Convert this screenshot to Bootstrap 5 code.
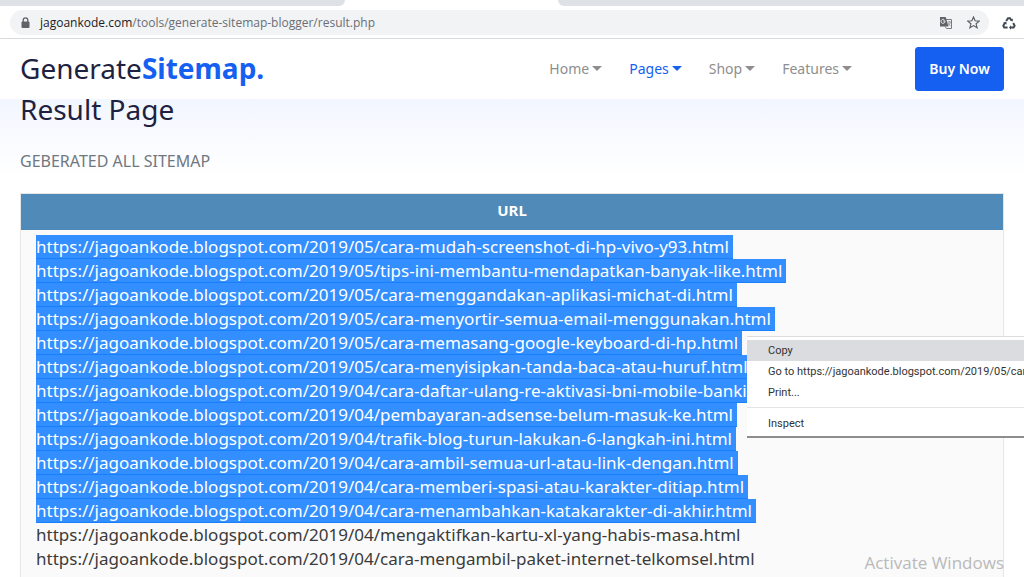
<!DOCTYPE html>
<html lang="en">
<head>
<meta charset="utf-8">
<meta name="viewport" content="width=device-width, initial-scale=1">
<title>Generate Sitemap</title>
<link href="https://cdn.jsdelivr.net/npm/bootstrap@5.3.0/dist/css/bootstrap.min.css" rel="stylesheet">
<style>
  html, body { height: 100%; }
  body { font-family: "Noto Sans", "Open Sans", sans-serif; background: #fff; color: #3a3f44; overflow: hidden; }
  .tab-strip { height: 6px; }
  .tab-left, .tab-right { background: #dee1e6; }
  .tab-left { width: 345px; border-bottom-right-radius: 6px; }
  .tab-right { border-bottom-left-radius: 6px; }
  .active-tab { width: 213px; }
  .address-bar { height: 33px; border-bottom: 1px solid #d9dadc; padding: 4px 8px 3px 10px; gap: 13px; }
  .omnibox { height: 25px; border-radius: 13px; background: #f1f3f4; padding: 0 9px 0 11px; gap: 10px; }
  .host-text { color: #202124; }
  .address-text { font-family: "Open Sans", sans-serif; font-size: 12px; line-height: 24px; color: #6b6f74; }
  .plain-btn { border: 0; padding: 0; background: none; line-height: 1; display: flex; }
  .site-nav { height: 60px; padding: 8px 20px; background: #fff; }
  .brand-text { font-size: 28px; line-height: 40px; color: #1e2240; padding-bottom: 3px; }
  .brand-text strong { color: #1560f0; font-weight: 700; }
  .menu-links { gap: 27px; margin-right: 63px; }
  .menu-links .nav-link { font-size: 14px; line-height: 24px; padding: 0; color: #8e8e8e; }
  .menu-links .nav-link.active { color: #1560f0; }
  .menu-links .dropdown-toggle::after { margin-left: 3px; vertical-align: 3px; border-width: 5px 5px 0; }
  .buy-btn { background: #1560f0; border-color: #1560f0; border-radius: 3px; color: #fff; font-size: 14px; font-weight: 600; width: 89px; height: 44px; padding: 0 0 2px; }
  .result-area { padding: 0 20px; background: linear-gradient(#f2f6ff, #fff 80px); }
  .result-area h1 { font-size: 28px; line-height: 20px; font-weight: 400; color: #1e2240; margin: 0 0 30px; }
  .section-label { font-size: 16px; line-height: 24px; color: #70777e; margin-bottom: 20px; }
  .url-table { border: 1px solid #e4e6e8; background: #fafafa; margin: 0; }
  .url-table th { background: #4f8ab9; color: #fff; font-size: 15px; line-height: 24px; padding: 4px 0 8px; text-align: center; }
  .url-table td { padding: 5px 15px; font-size: 17px; line-height: 24px; color: #3b3b3b; background: #fafafa; white-space: nowrap; }
  .picked { display: block; width: fit-content; height: 24px; line-height: 23px; padding-right: 4px; background: #338fff; border-bottom: 1px solid #187fff; color: #fff; }
  .context-menu { position: absolute; left: 747px; right: 0; top: 336px; height: 102px; overflow: hidden; background: #fff; border-top: 1px solid #ddd; border-bottom: 2px solid #8d8d8d; padding: 3px 0 1px; }
  .context-menu button { display: block; width: 100%; border: 0; background: #fff; text-align: left; white-space: nowrap; padding: 0 0 0 21px; font-family: Roboto, sans-serif; font-size: 11px; line-height: 21px; color: #333; }
  .context-menu button.hovered { background: #dadce0; }
  .context-menu hr { margin: 4px 0 5px; border-color: #e4e4e4; opacity: 1; }
  .os-watermark { position: absolute; right: 20px; bottom: 0; font-family: "Open Sans", sans-serif; font-size: 17px; line-height: 28px; color: #b9b9b9; }
</style>
</head>
<body class="d-flex flex-column position-relative">
<div class="tab-strip d-flex flex-shrink-0"><div class="tab-left"></div><div class="active-tab"></div><div class="tab-right flex-fill"></div></div>
<div class="address-bar d-flex align-items-center flex-shrink-0">
  <div class="omnibox d-flex align-items-center flex-fill">
    <svg width="9" height="12" viewBox="0 0 9 12" aria-hidden="true"><path d="M2.2 5V3.2a2.3 2.3 0 0 1 4.6 0V5" fill="none" stroke="#5f6368" stroke-width="1.3"/><rect x="0.5" y="4.5" width="8" height="6.5" rx="1" fill="#5f6368"/></svg>
    <a href="#" class="address-text text-decoration-none me-auto"><span class="host-text">jagoankode.com</span>/tools/generate-sitemap-blogger/result.php</a>
    <button class="plain-btn" aria-label="Translate"><svg width="14" height="14" viewBox="0 0 14 14"><path d="M5 3.5h7.5v9H7.5L6 10.5" fill="#f1f3f4" stroke="#777b80"/><path d="M1 1h5.7l2.8 9.5H1z" fill="#5f6368"/><path d="M6.2 5H4.2M6 5.3a2 2 0 1 1-.6-1.4" fill="none" stroke="#f1f3f4"/><path d="M8.500 6h3.500M10.200 5v1M11.400 6.200c-.4 1.500-1.200 2.400-2.200 3M9 7c.5 1.200 1.400 2.100 2.600 2.800" fill="none" stroke="#777b80" stroke-width=".7"/></svg></button>
    <button class="plain-btn ms-1" aria-label="Bookmark"><svg width="13" height="13" viewBox="0 0 13 13"><path d="M6.500 1l1.600 3.800 4.100.3-3.100 2.700 1 4-3.600-2.200-3.600 2.200 1-4L.8 5.100l4.100-.3z" fill="none" stroke="#5f6368" stroke-width="1.2"/></svg></button>
  </div>
  <button class="plain-btn" aria-label="Extension"><svg width="14" height="14" viewBox="0 0 14 14" fill="none" stroke="#424a55" stroke-width="2"><path d="M4.200 5L6 2.200h2L9.600 4.500"/><path d="M11.200 7l1.400 2.800-1 1.700H8"/><path d="M5.600 11.500H2.200l-.9-1.700L3 6.800"/><path d="M10.800 2.600v3L8.200 4.500zM9 9.200v4.600l-2-2.300zM.9 7l3.300-1.400.6 3z" fill="#424a55" stroke="none"/></svg></button>
</div>
<nav class="site-nav d-flex align-items-center flex-shrink-0">
  <a href="#" class="brand-text text-decoration-none me-auto">Generate<strong>Sitemap.</strong></a>
  <ul class="menu-links nav">
    <li><a class="nav-link dropdown-toggle" href="#">Home</a></li>
    <li><a class="nav-link dropdown-toggle active" href="#">Pages</a></li>
    <li><a class="nav-link dropdown-toggle" href="#">Shop</a></li>
    <li><a class="nav-link dropdown-toggle" href="#">Features</a></li>
  </ul>
  <button class="btn buy-btn">Buy Now</button>
</nav>
<main class="result-area flex-fill">
  <h1>Result Page</h1>
  <div class="section-label">GEBERATED ALL SITEMAP</div>
  <table class="url-table w-100">
    <thead><tr><th scope="col">URL</th></tr></thead>
    <tbody><tr><td>
      <span class="picked">https://jagoankode.blogspot.com/2019/05/cara-mudah-screenshot-di-hp-vivo-y93.html</span>
      <span class="picked">https://jagoankode.blogspot.com/2019/05/tips-ini-membantu-mendapatkan-banyak-like.html</span>
      <span class="picked">https://jagoankode.blogspot.com/2019/05/cara-menggandakan-aplikasi-michat-di.html</span>
      <span class="picked">https://jagoankode.blogspot.com/2019/05/cara-menyortir-semua-email-menggunakan.html</span>
      <span class="picked">https://jagoankode.blogspot.com/2019/05/cara-memasang-google-keyboard-di-hp.html</span>
      <span class="picked">https://jagoankode.blogspot.com/2019/05/cara-menyisipkan-tanda-baca-atau-huruf.html</span>
      <span class="picked">https://jagoankode.blogspot.com/2019/04/cara-daftar-ulang-re-aktivasi-bni-mobile-banking.html</span>
      <span class="picked">https://jagoankode.blogspot.com/2019/04/pembayaran-adsense-belum-masuk-ke.html</span>
      <span class="picked">https://jagoankode.blogspot.com/2019/04/trafik-blog-turun-lakukan-6-langkah-ini.html</span>
      <span class="picked">https://jagoankode.blogspot.com/2019/04/cara-ambil-semua-url-atau-link-dengan.html</span>
      <span class="picked">https://jagoankode.blogspot.com/2019/04/cara-memberi-spasi-atau-karakter-ditiap.html</span>
      <span class="picked">https://jagoankode.blogspot.com/2019/04/cara-menambahkan-katakarakter-di-akhir.html</span>
      <div>https://jagoankode.blogspot.com/2019/04/mengaktifkan-kartu-xl-yang-habis-masa.html</div>
      <div>https://jagoankode.blogspot.com/2019/04/cara-mengambil-paket-internet-telkomsel.html</div>
      <div>https://jagoankode.blogspot.com/2019/04/cara-mengatasi-blog-yang-tidak-bisa-dibuka-di-android.html</div>
    </td></tr></tbody>
  </table>
</main>
<div class="context-menu" role="menu">
  <button class="hovered" role="menuitem">Copy</button>
  <button role="menuitem">Go to https://jagoankode.blogspot.com/2019/05/cara-</button>
  <button role="menuitem">Print...</button>
  <hr>
  <button role="menuitem">Inspect</button>
</div>
<div class="os-watermark">Activate Windows</div>
<script src="https://cdn.jsdelivr.net/npm/bootstrap@5.3.0/dist/js/bootstrap.bundle.min.js"></script>
</body>
</html>
